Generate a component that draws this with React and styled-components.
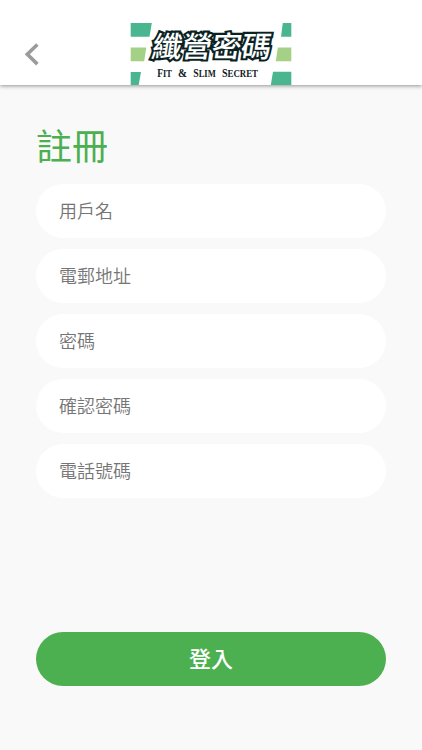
import React from "react";
import styled, { createGlobalStyle } from "styled-components";

const GlobalStyle = createGlobalStyle`
  * { box-sizing: border-box; }
  body {
    margin: 0;
    background: #f9f9f9;
    font-family: Roboto, "Noto Sans CJK TC", sans-serif;
  }
`;

const Screen = styled.div`
  display: flex;
  flex-direction: column;
  height: 750px;
  background: #f9f9f9;
`;

const Header = styled.header`
  display: grid;
  grid-template-columns: 1fr 162px 1fr;
  align-items: end;
  flex: none;
  height: 85px;
  background: #fff;
  box-shadow: 0 1px 4px rgba(0, 0, 0, 0.42);
`;

const BackButton = styled.button`
  display: flex;
  justify-self: start;
  margin: 0 0 19px 24px;
  padding: 0;
  border: 0;
  background: none;
`;

const Logo = styled.svg`
  display: block;
  width: 162px;
  height: 63px;
`;

const LogoName = styled.text`
  font-family: "Noto Sans CJK TC", sans-serif;
  font-weight: 500;
  font-size: 30px;
`;

const LogoTagline = styled.text`
  font-family: "Liberation Serif", serif;
  font-weight: 700;
  font-size: 12px;
  fill: #10201f;
`;

const Form = styled.form`
  display: flex;
  flex-direction: column;
  flex: 1;
  padding: 37px 36px 64.5px;
`;

const Title = styled.h1`
  margin: 0 0 9.5px;
  font-size: 36px;
  font-weight: 400;
  line-height: 52px;
  color: #4caf50;
`;

const Fields = styled.div`
  display: flex;
  flex-direction: column;
  gap: 11.2px;
`;

const Field = styled.input`
  width: 100%;
  height: 54px;
  padding: 1px 23px 0;
  border: 0;
  border-radius: 27px;
  outline: 0;
  background: #fff;
  font: 350 18px Roboto, "Noto Sans CJK TC", sans-serif;
  &::placeholder {
    color: #757575;
    opacity: 1;
  }
`;

const SubmitButton = styled.button`
  height: 54px;
  margin-top: auto;
  padding: 0 0 3px;
  border: 0;
  border-radius: 27px;
  background: #4caf50;
  color: #fff;
  font: 500 22px Roboto, "Noto Sans CJK TC", sans-serif;
`;

const fields = [
  { label: "用戶名", type: "text" },
  { label: "電郵地址", type: "email" },
  { label: "密碼", type: "password" },
  { label: "確認密碼", type: "password" },
  { label: "電話號碼", type: "tel" },
];

const taglineWords = [
  { x: 27.3, cap: "F", rest: "IT", width: 14.5 },
  { x: 48, cap: "&", rest: "", width: 9 },
  { x: 63.2, cap: "S", rest: "LIM", width: 22.5 },
  { x: 92, cap: "S", rest: "ECRET", width: 36 },
];

function BrandLogo() {
  return (
    <Logo viewBox="0 0 162 63">
      <g fill="#4ab68f">
        <path d="M.7 1H21.800L19.500 14.700H.7Z" />
        <path d="M.7 50H11L8.700 63H.7Z" />
        <path d="M152.800 1H161.300V14.700H151Z" />
        <path d="M143 49.700H161.300V63H140.800Z" />
      </g>
      <g fill="#a4d185">
        <path d="M.7 25.500H16.300L14.200 39.200H.7Z" />
        <path d="M147.800 25.500H161.300V39.200H145.800Z" />
      </g>
      <LogoName
        transform="translate(20.800 34.500) skewX(-9) scale(1 .96)"
        textLength="119"
        fill="#fff"
        stroke="#0b2222"
        strokeWidth="4.500"
        strokeLinejoin="miter"
        strokeMiterlimit="2"
        paintOrder="stroke"
      >
        纖營密碼
      </LogoName>
      {taglineWords.map((w) => (
        <LogoTagline
          key={w.x}
          x={w.x}
          y="54.500"
          textLength={w.width}
          lengthAdjust="spacingAndGlyphs"
        >
          {w.cap}
          <tspan fontSize="10.500">{w.rest}</tspan>
        </LogoTagline>
      ))}
    </Logo>
  );
}

export default function App() {
  return (
    <Screen>
      <GlobalStyle />
      <Header>
        <BackButton type="button" aria-label="返回">
          <svg width="16" height="24" viewBox="0 0 16 24" fill="none">
            <path d="M13.400 2.500L3.300 12.300L13.400 22.100" stroke="#9b9b9b" strokeWidth="3.600" />
          </svg>
        </BackButton>
        <BrandLogo />
      </Header>
      <Form onSubmit={(e) => e.preventDefault()}>
        <Title>註冊</Title>
        <Fields>
          {fields.map((f) => (
            <Field key={f.label} type={f.type} placeholder={f.label} />
          ))}
        </Fields>
        <SubmitButton type="submit">登入</SubmitButton>
      </Form>
    </Screen>
  );
}
